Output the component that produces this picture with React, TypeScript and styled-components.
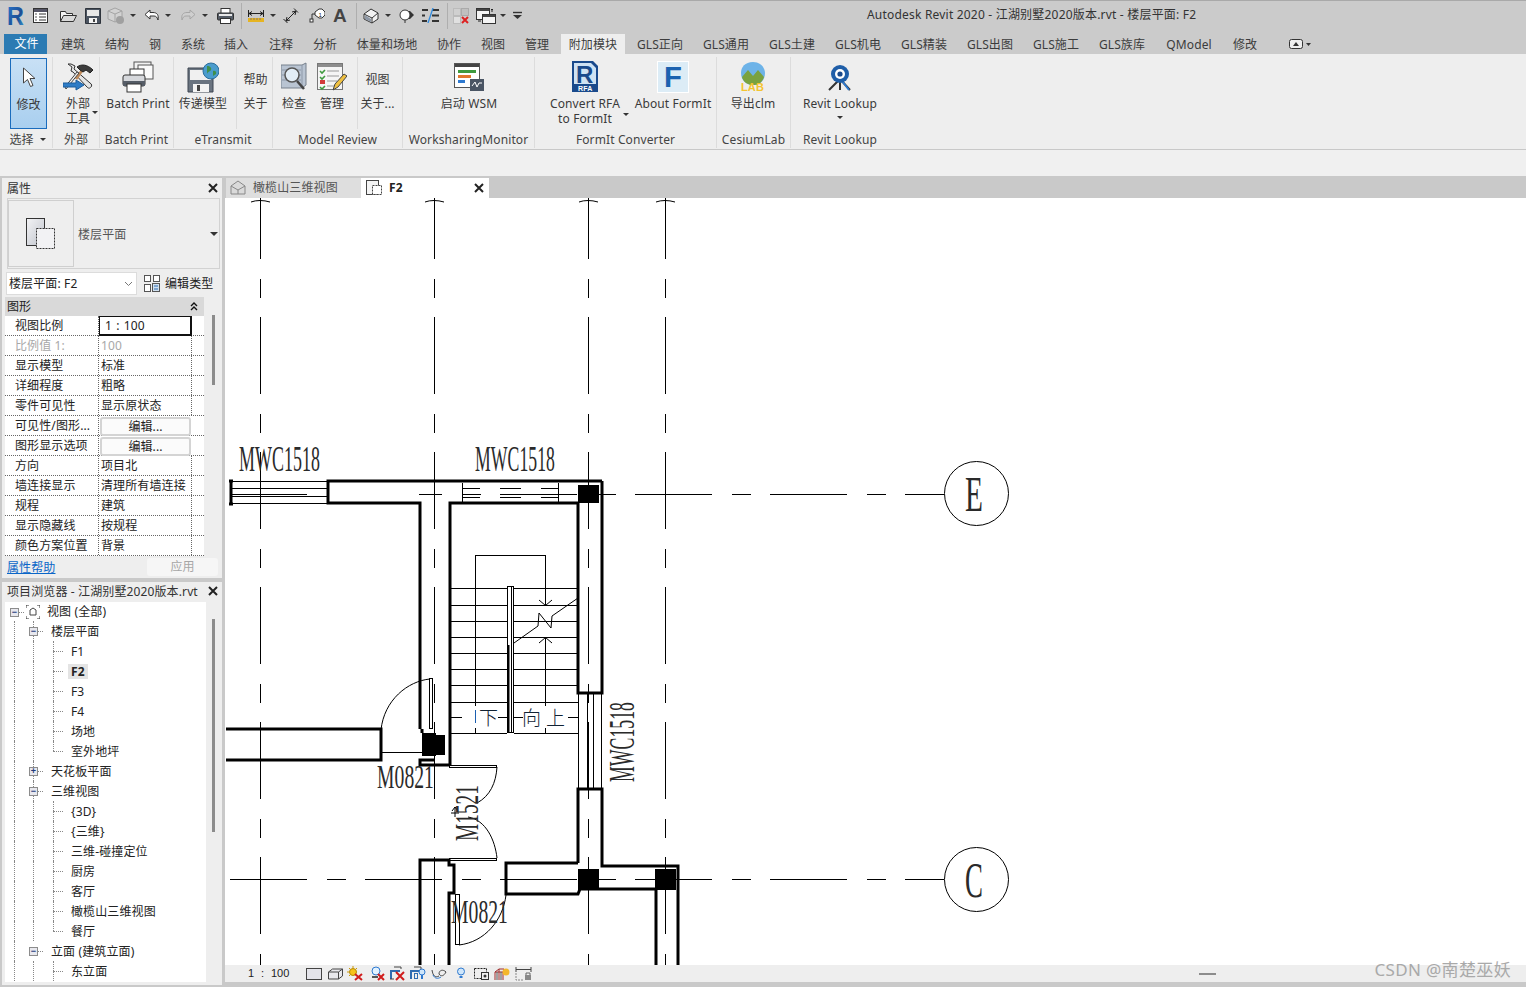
import React from "react";
import styled, { createGlobalStyle } from "styled-components";

const UI = `"Noto Sans", "Noto Sans CJK SC", sans-serif`;
const Global = createGlobalStyle`
  html, body { margin: 0; padding: 0; width: 1526px; height: 987px; overflow: hidden; background: #c9c9c9; }
  #root { width: 1526px; height: 987px; }
  * { box-sizing: border-box; }
`;

const Win = styled.div`
  width: 1526px; height: 987px; display: flex; flex-direction: column;
  background: #c9c9c9; font: 12px/15px ${UI}; letter-spacing: .12px; color: #3a3a3a; overflow: hidden;
  border-top: 1px solid #a9a9a9;
`;

/* ---------- title ---------- */
const TitleBar = styled.div`height: 33px; display: flex; align-items: center; background: #cbcbcb; padding-bottom: 4px;`;
const Slot = styled.div<{ $w: number; $ml: number }>`
  width: ${p => p.$w}px; margin-left: ${p => p.$ml}px; height: 26px; flex: none; display: flex; align-items: center; justify-content: center;
`;
const Sep = styled.div`width: 1px; height: 26px; background: #aeaeae;`;
const TitleText = styled.div<{ $ml: number }>`margin-left: ${p => p.$ml}px; font-size: 12px; letter-spacing: .2px; color: #333; white-space: nowrap; margin-bottom: 3px;`;

const Caret = styled.span`
  width: 0; height: 0; border: 3px solid transparent; border-top: 3px solid #333; border-bottom: 0; display: inline-block;
`;

/* ---------- tabs ---------- */
const TabBar = styled.div`height: 20px; display: flex; padding-left: 4px; background: #cbcbcb;`;
const FileTab = styled.div`
  width: 43px; height: 20px; background: #2c7bb3; color: #fff; text-align: center; line-height: 20px; padding-left: 2px;
`;
const Tab = styled.div<{ $w: number; $active?: boolean }>`
  width: ${p => p.$w}px; height: 20px; text-align: center; line-height: 21px; flex: none; color: #3c3c3c; white-space: nowrap;
  background: ${p => (p.$active ? "#eeeeee" : "transparent")};
`;

/* ---------- ribbon ---------- */
const Ribbon = styled.div`height: 96px; background: #eeeeee; display: flex; border-bottom: 1px solid #c8c8c8; padding-left: 3px;`;
const Panel = styled.div<{ $w: number; $end?: boolean }>`
  width: ${p => p.$w}px; flex: none; display: flex; flex-direction: column; position: relative; padding-left: 1px;
  border-right: ${p => (p.$end ? "0" : "1px solid #dcdcdc")}; margin-top: 3px; margin-bottom: 1px;
`;
const PanelBody = styled.div`height: 74px; display: flex;`;
const PanelLabel = styled.div`height: 18px; margin-left: -1px; padding-top: 1px; text-align: center; line-height: 18px; color: #444; white-space: nowrap; display:flex; align-items:center; justify-content:center; gap:6px;`;
const Big = styled.div<{ $w: number; $ml?: number; $sel?: boolean }>`
  width: ${p => p.$w}px; margin-left: ${p => p.$ml ?? 0}px; flex: none; display: flex; flex-direction: column; align-items: center; text-align: center; position: relative;
  padding-top: 1px; white-space: nowrap; height: 73px;
  ${p => p.$sel && `background: linear-gradient(#c8e0f5,#a9cfef); border: 1px solid #1a6cbd; padding-top: 0; margin-top: 1px; height: 71px;`}
`;
const BigIcon = styled.div`height: 38px; display: flex; align-items: center; justify-content: center; flex: none;`;
const MiniCaret = styled(Caret)<{ $l?: number; $t?: number }>`position: absolute; left: ${p => p.$l}px; top: ${p => p.$t}px;`;
const SmallCol = styled.div<{ $w: number; $ml: number }>`
  width: ${p => p.$w}px; margin-left: ${p => p.$ml}px; flex: none; padding-top: 15px; display: flex; flex-direction: column; align-items: center; gap: 9px;
  border-left: 1px solid #dcdcdc; height: 72px;
`;
const OptionsBar = styled.div`height: 26px; background: #f0f0f0;`;

/* ---------- workspace ---------- */
const Work = styled.div`flex: 1; display: flex; margin-top: 2px; min-height: 0;`;
const Side = styled.div`width: 220px; margin-left: 2px; flex: none; display: flex; flex-direction: column; gap: 4px; color: #222;`;
const Pane = styled.div<{ $h: number }>`height: ${p => p.$h}px; background: #eeeeee; flex: none; display: flex; flex-direction: column;`;
const PaneHead = styled.div<{ $up?: boolean }>`
  height: 20px; flex: none; display: flex; align-items: center; justify-content: space-between; padding: ${p => (p.$up ? "0 4px 2px 5px" : "0 4px 0 5px")}; color: #333; white-space: nowrap;
`;
const TypeBox = styled.div`
  height: 71px; margin: 0 2px 0 5px; border: 1px solid #d2d2d2; display: flex; align-items: center; position: relative; flex: none; color:#555; padding-bottom: 0;
`;
const TypeIcon = styled.div`
  width: 66px; height: 67px; margin-left: 0; border: 1px solid #cfcfcf; display: flex; align-items: center; justify-content: center; margin-right: 4px;
`;
const TypeName = styled.span`margin-top: 2px;`;
const TypeCaret = styled(Caret)`position: absolute; right: 1px; top: 33px; border-width: 4px 4px 0; `;
const InstanceRow = styled.div`height: 25px; margin: 2px 0 0 4px; display: flex; align-items: center; flex: none;`;
const Select = styled.div`
  width: 131px; height: 23px; background: #fff; border: 1px solid #dcdcdc; display: flex; align-items: center; justify-content: space-between; padding: 0 3px 0 2px;
`;
const EditType = styled.div`display: flex; align-items: center; gap: 5px; margin-left: 7px; color: #222;`;
const PropBody = styled.div`display: flex; flex: none;`;
const PropCol = styled.div`width: 199px; margin-left: 3px; flex: none;`;
const GroupHead = styled.div`
  height: 19px; background: #d9d9d9; display: flex; align-items: center; justify-content: space-between; padding: 0 6px 0 2px; margin-top: 1px;
  font-size: 12px;
`;
const PropRow = styled.div`
  display: grid; grid-template-columns: 94px 93px 12px; height: 20px; border-bottom: 1px dotted #666; background: #fff;
`;
const PropName = styled.div<{ $dim?: boolean }>`
  padding-left: 10px; line-height: 19px; border-right: 1px dotted #666; white-space: nowrap; overflow: hidden; color: ${p => (p.$dim ? "#a8a8a8" : "#222")};
`;
const PropVal = styled.div<{ $dim?: boolean; $focus?: boolean }>`
  padding-left: ${p => (p.$focus ? "5px" : "2px")}; line-height: ${p => (p.$focus ? "17px" : "19px")}; border-right: 1px dotted #666; white-space: nowrap; color: ${p => (p.$dim ? "#a8a8a8" : "#222")};
  ${p => p.$focus && `border: 1px solid #111; border-width: 1px 2px 2px 1px; word-spacing: 1px;`}
`;
const EditBtn = styled.div`
  margin: 1px; background: #fbfbfb; border: 2px solid #d4d4d4; border-radius: 3px; text-align: center; line-height: 15px; color: #222; white-space: nowrap;
`;
const Thumb = styled.div<{ $t: number; $h: number; $l: number }>`
  width: 3px; height: ${p => p.$h}px; background: #8c8c8c; margin-top: ${p => p.$t}px; margin-left: ${p => p.$l}px; flex: none;
`;
const PropFoot = styled.div`display: flex; align-items: center; justify-content: space-between; height: 22px; padding: 0 4px 0 5px;`;
const HelpLink = styled.a`color: #0a66c8; text-decoration: underline; `;
const ApplyBtn = styled.div`
  width: 71px; height: 18px; background: #f6f6f6; border-radius: 3px; text-align: center; line-height: 17px; color: #a6a6a6;
`;
const TreeWrap = styled.div`display: flex; flex: 1; min-height: 0; padding-bottom: 3px;`;
const Tree = styled.div`width: 201px; margin-left: 3px; background: #fff; overflow: hidden; flex: none; color: #222;`;
const TreeRow = styled.div<{ $h?: number }>`height: ${p => p.$h ?? 20}px; display: flex; align-items: center; white-space: nowrap;`;
const Cell = styled.div<{ $w: number; $v?: boolean; $h?: boolean; $last?: boolean; $cx: number }>`
  width: ${p => p.$w}px; height: 20px; flex: none; position: relative;
  &::before { content: ""; position: absolute; left: ${p => p.$cx}px; top: 0; bottom: ${p => (p.$last ? "10px" : "0")}; border-left: 1px dotted #888; display: ${p => (p.$v ? "block" : "none")}; }
  &::after { content: ""; position: absolute; left: ${p => p.$cx}px; right: 0; top: 10px; border-top: 1px dotted #888; display: ${p => (p.$h ? "block" : "none")}; }
`;
const Box = styled.div<{ $c: number }>`
  position: absolute; z-index: 1; left: ${p => p.$c - 4}px; top: 6px; width: 9px; height: 9px; background: #e8e8ee; border: 1px solid #8c8c8c;
  display: flex; align-items: center; justify-content: center; color: #223a7a; font: bold 9px/7px "Liberation Sans", sans-serif;
`;
const NodeText = styled.span<{ $sel?: boolean; $pad: number }>`
  margin-left: ${p => p.$pad}px; ${p => p.$sel && `font-weight: 700; background: #e4e4e4; margin-left: 5px; padding: 0 3px;`}
`;

/* ---------- doc area ---------- */
const Main = styled.div`flex: 1; margin-left: 3px; display: flex; flex-direction: column; min-width: 0;`;
const DocTabs = styled.div`height: 20px; display: flex; flex: none; background: #c9c9c9; padding-left: 1px;`;
const DocTab = styled.div<{ $w: number; $on?: boolean }>`
  width: ${p => p.$w}px; height: 20px; flex: none; display: flex; align-items: center; gap: 7px; padding: 0 5px 1px ${p => (p.$on ? "5px" : "4px")};
  background: ${p => (p.$on ? "#fff" : "#dedede")}; color: ${p => (p.$on ? "#222" : "#555")};
`;
const DocName = styled.span<{ $bold?: boolean }>`flex: 1; font-weight: ${p => (p.$bold ? 700 : 400)};`;
const Canvas = styled.div`height: 767px; background: #fff; flex: none;`;
const PlanSvg = styled.svg`display: block; width: 1301px; height: 767px; font-family: "Liberation Serif", serif;`;
const ViewBar = styled.div`
  height: 17px; background: #eeeeee; display: flex; align-items: center; flex: none; position: relative; padding-left: 23px; color: #222; font-size: 11px; letter-spacing: 0;
`;
const Scale = styled.div`width: 58px; flex: none; white-space: pre; word-spacing: .4px; font-family: "Liberation Sans", sans-serif;`;
const VSlot = styled.div<{ $w: number; $ml: number }>`
  width: ${p => p.$w}px; margin-left: ${p => p.$ml}px; flex: none; display: flex; justify-content: center;
`;
const Water = styled.div`
  position: absolute; right: 15px; top: -6px; font: 17px/22px "Noto Sans", "Noto Sans CJK SC", sans-serif; color: #a9a9a9; white-space: nowrap; letter-spacing: 0.35px;
`;
const HScroll = styled.div`position: absolute; left: 974px; top: 8px; width: 17px; height: 2px; background: #8c8c8c;`;

/* ---------- icons ---------- */
const Ico: React.FC<{ w?: number; h?: number; vb?: string; children: React.ReactNode }> = ({ w = 20, h = 20, vb, children }) => (
  <svg width={w} height={h} viewBox={vb ?? `0 0 ${w} ${h}`} style={{ display: "block", flex: "none" }}>{children}</svg>
);
const X: React.FC = () => (
  <Ico w={10} h={10}><path d="M1 1L9 9M9 1L1 9" stroke="#222" strokeWidth="2" /></Ico>
);

const RLogo = () => (
  <Ico w={21} h={30}>
    <defs><linearGradient id="rg" x1="0" x2="1" y1="0" y2="1"><stop offset="0" stopColor="#2f7ad0" /><stop offset=".6" stopColor="#1c4f96" /><stop offset="1" stopColor="#3aa0d8" /></linearGradient></defs>
    <text x="1" y="24" fontFamily="Liberation Sans" fontWeight="700" fontSize="26" fill="url(#rg)" textLength="17" lengthAdjust="spacingAndGlyphs">R</text>
  </Ico>
);
const QProps = () => (<Ico w={15} h={15}><rect x=".5" y=".5" width="14" height="14" fill="#fff" stroke="#333" /><rect x="1" y="1" width="13" height="3" fill="#556" /><path d="M6 6h7M6 9h7M6 12h7" stroke="#333" /><path d="M2 6h2M2 9h2M2 12h2" stroke="#555" /></Ico>);
const QOpen = () => (<Ico w={17} h={13}><path d="M.5 12.5V2.5h5l1 2h6v2" fill="#f4f4f4" stroke="#333" /><path d="M.5 12.5l3-6h13l-3 6z" fill="#dadada" stroke="#333" /></Ico>);
const QSave = () => (<Ico w={16} h={16}><path d="M.5.5h15v15H.5z" fill="#4a5360" stroke="#2f343c" /><rect x="2" y="2" width="12" height="6" fill="#e8e8e8" /><rect x="4" y="10" width="8" height="5" fill="#f4f4f4" /><rect x="8" y="11" width="2" height="3" fill="#444" /></Ico>);
const QCube = () => (<Ico w={18} h={18}><path d="M8 1l7 3v8l-7 3-7-3V4z" fill="#d2d2d2" stroke="#a4a4a4" /><path d="M1 4l7 3 7-3M8 7v8" stroke="#a4a4a4" fill="none" /><circle cx="13" cy="13" r="4" fill="#a0a0a0" /></Ico>);
const QUndo = ({ dim }: { dim?: boolean }) => (
  <Ico w={16} h={13}><path d="M6 1L1 5.5 6 10V7h4c2 0 3 1 4 4 1-5-1-7.5-5-7.5H6z" fill={dim ? "#cfcfcf" : "#fff"} stroke={dim ? "#a6a6a6" : "#333"} strokeLinejoin="round" transform={dim ? "matrix(-1 0 0 1 16 0)" : undefined} /></Ico>
);
const QPrint = () => (<Ico w={17} h={16}><rect x="4" y=".5" width="9" height="5" fill="#fff" stroke="#333" /><rect x=".5" y="5" width="16" height="7" rx="1" fill="#555c66" stroke="#333" /><rect x="2" y="6" width="13" height="2" fill="#e8e8e8" /><rect x="3.5" y="10.5" width="10" height="5" fill="#fff" stroke="#333" /></Ico>);
const QMeasure = () => (<Ico w={16} h={14}><path d="M.5 1v7M15.5 1v7M1 4.5h14M1 4.5l3-2M1 4.5l3 2M15 4.5l-3-2M15 4.5l-3 2" stroke="#222" fill="none" /><rect y="9" width="16" height="4" fill="#e6b422" /><path d="M3 9v2M6 9v2M9 9v2M12 9v2" stroke="#876" /></Ico>);
const QAlign = () => (<Ico w={16} h={16}><path d="M.5 11l4 4M11 .5l4 4M3 13L13 3M3 13l1-4M3 13l4-1M13 3l-4 1M13 3l-1 4" stroke="#222" fill="none" /></Ico>);
const QTag = () => (<Ico w={16} h={15}><path d="M6 4l4-3h3l3 3v3l-3 3h-3L6 7z" fill="#fff" stroke="#333" /><text x="9.5" y="8.5" fontSize="6" fontFamily="Liberation Sans" fill="#222">1</text><path d="M6 6L3 6v5" stroke="#333" fill="none" /><rect x="1" y="11" width="3" height="3" fill="#fff" stroke="#333" /></Ico>);
const QHouse = () => (<Ico w={16} h={16}><path d="M8 1l7 4v6l-6 4-8-4V6z" fill="#f2f2f2" stroke="#333" /><path d="M1 6l8 4 6-5M9 10v5" stroke="#333" fill="none" /><path d="M2 7l6 4v3l-6-3z" fill="#8d97a5" /></Ico>);
const QSection = () => (<Ico w={15} h={15}><path d="M8 3h3l4 4-4 4H8z" fill="#333" /><circle cx="6" cy="7" r="5" fill="#fff" stroke="#333" /><path d="M6 12v3" stroke="#333" /></Ico>);
const QThin = () => (<Ico w={17} h={15}><path d="M0 2h6M10 2h7M0 7.5h3M10 7.5h7M0 13h5M10 13h7" stroke="#333" strokeWidth="2" /><path d="M11 0L6 15" stroke="#2f8be0" strokeWidth="1.3" /></Ico>);
const QClose = () => (<Ico w={16} h={16}><rect x=".5" y=".5" width="7" height="7" fill="#d0d0d0" stroke="#bbb" /><rect x="8.5" y=".5" width="7" height="7" fill="#c0c0c0" stroke="#aaa" /><rect x=".5" y="8.5" width="7" height="7" fill="#e0e0e0" stroke="#bbb" /><path d="M9 9l6 6M15 9l-6 6" stroke="#d22" strokeWidth="2" /></Ico>);
const QSwitch = () => (<Ico w={20} h={16}><rect x=".5" y=".5" width="13" height="11" fill="#f4f4f4" stroke="#333" /><rect x="1" y="1" width="12" height="2" fill="#444" /><rect x="6.5" y="6.5" width="13" height="9" fill="#f4f4f4" stroke="#333" /><rect x="7" y="7" width="12" height="2" fill="#444" /><path d="M16 1v3M15 2l1-1 1 1M2 13h3" stroke="#222" fill="none" /></Ico>);
const QMore = () => (<Ico w={9} h={9}><path d="M0 1.5h9" stroke="#333" strokeWidth="1.4" /><path d="M0 4h9L4.5 8z" fill="#333" /></Ico>);
const QLetterA = () => (<Ico w={14} h={22}><text x="0" y="17" fontFamily="Liberation Sans" fontWeight="700" fontSize="19" fill="#444">A</text></Ico>);

const Cursor = () => (<Ico w={14} h={22}><path d="M1.5 1v15l4-3.5 3 7 2.5-1-3-7h5z" fill="#fff" stroke="#444" /></Ico>);
const Tools = () => (
  <Ico w={31} h={29}>
    <path d="M5 1l4 3-1 4 2 1 14 15c2 2 3 1 4 0s1-3-1-4L11 6l1-3-4-2z" fill="#e6e6e6" stroke="#333" />
    <path d="M13 16l7-10" stroke="#c08a5a" strokeWidth="3" />
    <path d="M14 4c4-3 10-3 16 3l-3 3-4-3-3 2-3-2z" fill="#3c3c3c" stroke="#222" />
    <path d="M2 24l12-15 2 1-13 16z" fill="#f0f0f0" stroke="#444" />
    <path d="M0 20h13v-3l8 5-8 5v-3H0z" fill="#2e7cc6" stroke="#1a5c9c" />
  </Ico>
);
const BatchPrint = () => (
  <Ico w={32} h={32}>
    <rect x="12" y="1" width="17" height="14" fill="#f2f2f2" stroke="#555" /><rect x="16" y="4" width="15" height="14" fill="#fafafa" stroke="#555" />
    <rect x="8" y="8" width="14" height="8" fill="#fff" stroke="#333" />
    <rect x="1" y="14" width="22" height="11" rx="2" fill="#d6d8dc" stroke="#333" /><rect x="1" y="20" width="22" height="5" fill="#555c66" />
    <rect x="5" y="23" width="14" height="8" fill="#fff" stroke="#333" />
  </Ico>
);
const ETrans = () => (
  <Ico w={32} h={31}>
    <path d="M1 6h25v24H1z" fill="#6a7480" stroke="#3c4450" /><rect x="3" y="8" width="21" height="10" fill="#f0f0f0" />
    <rect x="6" y="22" width="16" height="8" fill="#f4f4f4" /><rect x="10" y="23" width="3" height="6" fill="#444" />
    <circle cx="24" cy="9" r="8" fill="#4a9ccd" stroke="#2c6e9c" /><path d="M20 4c3 0 5 2 4 4s-3 1-4 4M26 9c2-1 4 1 3 3l-3 2z" fill="#3f8f4b" />
  </Ico>
);
const Check = () => (
  <Ico w={26} h={30}>
    <path d="M0 3h21l4-2v22l-4 3H0z" fill="#b9c4d2" stroke="#77808c" />
    <path d="M1 8h19M1 13h19M1 18h19M21 3v23" stroke="#8d98a8" />
    <circle cx="11" cy="13" r="7" fill="#e3eef7" stroke="#555" strokeWidth="1.5" />
    <path d="M16 19l7 8" stroke="#444" strokeWidth="2.5" />
  </Ico>
);
const Manage = () => (
  <Ico w={30} h={29}>
    <rect x=".5" y=".5" width="25" height="26" fill="#f5f5f5" stroke="#777" /><rect x="1" y="1" width="24" height="3" fill="#8d8d8d" />
    <path d="M3 8l2 2 3-3M3 14l2 2 3-3M3 24l2 2 3-3" stroke="#3e9a3e" strokeWidth="1.6" fill="none" />
    <rect x="3" y="17" width="5" height="4" fill="#d23a3a" />
    <path d="M10 8h12M10 13h12M10 18h10M10 23h7" stroke="#999" />
    <path d="M16 27l2-6 9-10 3 2-9 11z" fill="#f0c040" stroke="#444" />
  </Ico>
);
const Wsm = () => (
  <Ico w={30} h={28}>
    <rect x=".5" y=".5" width="25" height="24" fill="#fff" stroke="#555" /><rect x="1" y="1" width="24" height="3" fill="#444" />
    <rect x="4" y="7" width="18" height="3" fill="#3e9a3e" /><rect x="4" y="12" width="13" height="3" fill="#e0782e" /><rect x="4" y="17" width="7" height="3" fill="#2f7ad0" />
    <rect x="16" y="16" width="14" height="12" fill="#4a5564" /><path d="M18 23l3-4 2 5 2-4h3" stroke="#fff" fill="none" />
  </Ico>
);
const Rfa = () => (
  <Ico w={27} h={33}>
    <path d="M0 0h21l5 5v26H0z" fill="#1a4a8c" /><path d="M2 2h17l5 5v16H2z" fill="#cfe2f3" />
    <text x="4" y="22" fontFamily="Liberation Sans" fontWeight="700" fontSize="24" fill="#1a4a8c">R</text>
    <text x="6" y="30" fontFamily="Liberation Sans" fontWeight="700" fontSize="7" fill="#fff">RFA</text>
  </Ico>
);
const Formit = () => (
  <Ico w={32} h={33}>
    <rect width="32" height="32" fill="#fff" /><rect x="1" y="1" width="30" height="30" fill="#dcecf6" />
    <text x="7" y="26" fontFamily="Liberation Sans" fontWeight="700" fontSize="30" fill="#1b62b0" textLength="18" lengthAdjust="spacingAndGlyphs">F</text>
  </Ico>
);
const Lab = () => (
  <Ico w={26} h={33}>
    <path d="M13 1c8 0 12 6 12 11 0 8-6 12-12 12S1 20 1 12C1 6 5 1 13 1z" fill="#6db3e8" />
    <path d="M2 16l6-7 5 6 5-6 6 7c-2 6-6 8-11 8S3 21 2 16z" fill="#7aa23f" />
    <text x="1" y="30" fontFamily="Liberation Sans" fontWeight="700" fontSize="11" fill="#f4c430">LAB</text>
  </Ico>
);
const Lookup = () => (
  <Ico w={28} h={28}>
    <path d="M14 16L3 27M14 16l10 11M14 18v9" stroke="#333" strokeWidth="2" /><path d="M16 18l7 9" stroke="#2f7ad0" strokeWidth="2" />
    <circle cx="14" cy="11" r="9" fill="#1f5ea8" /><circle cx="14" cy="11" r="5" fill="#fff" /><circle cx="14" cy="11" r="2.6" fill="#1a4a8c" />
  </Ico>
);
const TypeGlyph = () => (
  <Ico w={32} h={32}>
    <defs><linearGradient id="tg" x1="0" x2="1" y1="0" y2="1"><stop offset="0" stopColor="#f4f4f6" /><stop offset="1" stopColor="#c0c4cc" /></linearGradient></defs>
    <rect x="1.5" y=".5" width="18" height="27" fill="url(#tg)" stroke="#333" />
    <rect x="11.5" y="10.5" width="18" height="20" fill="#f2f2f4" stroke="#333" strokeDasharray="2 1" />
  </Ico>
);
const EditTypeGlyph = () => (
  <Ico w={16} h={17}><rect x=".5" y=".5" width="6" height="6" fill="#fff" stroke="#555" /><rect x="9.5" y=".5" width="6" height="6" fill="#fff" stroke="#555" /><rect x=".5" y="9.5" width="6" height="7" fill="#fff" stroke="#555" /><rect x="8.5" y="8.5" width="7" height="8" fill="#cfe0ef" stroke="#555" /><path d="M10 11h4M10 14h4" stroke="#2f6bb0" /></Ico>
);
const Chev = () => (<Ico w={8} h={9}><path d="M1 4l3-3 3 3M1 8l3-3 3 3" stroke="#111" strokeWidth="1.4" fill="none" /></Ico>);
const DownChev = () => (<Ico w={9} h={6}><path d="M1 1l3.5 3.5L8 1" stroke="#777" fill="none" /></Ico>);
const ViewRootIcon = () => (<Ico w={14} h={14}><path d="M0 3V0h3M11 0h3v3M14 11v3h-3M3 14H0v-3" stroke="#333" fill="none" /><path d="M4 5l3-2 3 2v5H4z" fill="#fff" stroke="#444" /></Ico>);
const HouseTab = () => (<Ico w={16} h={15}><path d="M8 1l7 5v8H1V6z" fill="#dadada" stroke="#888" /><path d="M1 6l7 4 7-4M8 10v4" stroke="#888" fill="none" /></Ico>);
const PlanTab = () => (<Ico w={16} h={15}><rect x=".5" y=".5" width="12" height="14" fill="#f4f4f4" stroke="#444" /><rect x="6.5" y="5.5" width="9" height="9" fill="#fff" stroke="#444" strokeDasharray="2 1" /></Ico>);

const viewIcons: [number, number, React.ReactNode][] = [
  [16, 0, <Ico w={16} h={12}><rect x=".5" y=".5" width="15" height="11" fill="#e4e4ea" stroke="#444" /></Ico>],
  [15, 6, <Ico w={15} h={12}><path d="M.5 4l4-3h10v7l-4 3H.5z" fill="#e8e8ec" stroke="#444" /><path d="M.5 4h10v7M10.5 4l4-3" stroke="#444" fill="none" /></Ico>],
  [16, 4, <Ico w={16} h={15}><circle cx="6" cy="6" r="3.5" fill="#f6c21a" stroke="#b78a00" /><path d="M6 0v2M0 6h2M2 2l1 1M10 2l-1 1M2 10l1-1" stroke="#c9980a" /><path d="M8 8l7 6M15 8l-7 6" stroke="#d01c1c" strokeWidth="2" /></Ico>],
  [14, 8, <Ico w={14} h={15}><circle cx="5" cy="5" r="4" fill="#e2f2ff" stroke="#2f7ad0" /><path d="M1 11h6" stroke="#222" strokeWidth="1.5" /><path d="M7 8l6 6M13 8l-6 6" stroke="#d01c1c" strokeWidth="2" /></Ico>],
  [16, 5, <Ico w={16} h={15}><path d="M1 13V5h9" stroke="#2f6bb0" strokeWidth="2" fill="none" /><path d="M4 1h7v2" stroke="#444" fill="none" /><path d="M0 13h4" stroke="#444" /><path d="M6 6l8 8M14 6l-8 8" stroke="#d01c1c" strokeWidth="2" /></Ico>],
  [16, 4, <Ico w={16} h={15}><path d="M1 13V5h9" stroke="#2f6bb0" strokeWidth="2" fill="none" /><path d="M4 1h7v2" stroke="#444" fill="none" /><rect x="4.5" y="7.5" width="3" height="5" stroke="#2f6bb0" fill="none" /><circle cx="12" cy="6" r="3" fill="#cfe6fa" stroke="#2f7ad0" /><path d="M12 9v4" stroke="#2f7ad0" strokeWidth="2" /></Ico>],
  [16, 5, <Ico w={16} h={12}><path d="M1 2c1 6 3 8 7 6M15 4c-3-3-7-2-7 2 2 3 5 2 7-2z" stroke="#444" fill="none" /><path d="M2 7c2 4 5 4 8 2" stroke="#2f7ad0" fill="none" /></Ico>],
  [8, 10, <Ico w={8} h={13}><circle cx="4" cy="4.5" r="3.5" fill="#cfe6fa" stroke="#2f7ad0" /><path d="M2.5 9h3v2h-3z" fill="#2f7ad0" /></Ico>],
  [15, 9, <Ico w={15} h={13}><rect x=".5" y="1.5" width="12" height="10" fill="none" stroke="#222" strokeDasharray="2 1" /><rect x="7.5" y="5.5" width="7" height="7" fill="#eee" stroke="#333" /><circle cx="11" cy="9" r="1.5" fill="#333" /></Ico>],
  [16, 5, <Ico w={16} h={14}><path d="M1 13V5l4-3h5v3H1M5 2v11M9 5v8" stroke="#a02c2c" fill="none" /><path d="M3 13V5M7 13V5" stroke="#555" /><circle cx="12" cy="5" r="3.5" fill="#f4b72a" /></Ico>],
  [17, 5, <Ico w={17} h={14}><path d="M1 0v5M16 0v5M1 2.5h15" stroke="#444" /><path d="M1 6v7h7" stroke="#888" strokeDasharray="2 1" fill="none" /><rect x="10" y="8" width="6" height="5" fill="#888" /><path d="M11 8V6h4v2" stroke="#666" fill="none" /></Ico>],
];

/* ---------- floor plan ---------- */
const Thick = styled.path`fill: none; stroke: #000; stroke-width: 3; stroke-linejoin: miter;`;
const Thin = styled.path`fill: none; stroke: #000; stroke-width: 1; shape-rendering: crispEdges;`;
const Curve = styled.path`fill: none; stroke: #000; stroke-width: 1;`;
const Grid = styled.path`fill: none; stroke: #000; stroke-width: 1; shape-rendering: crispEdges; stroke-dasharray: 77 20 19 19;`;
const Solid = styled.rect`fill: #000;`;
const Mask = styled.rect`fill: #fff;`;
const Hollow = styled.rect`fill: #fff; stroke: #000; stroke-width: 1; shape-rendering: crispEdges;`;

const Lbl: React.FC<{ x: number; y: number; len: number; size?: number; rot?: boolean; t: string }> = ({ x, y, len, size = 35, rot, t }) => (
  <text x={x} y={y} fontSize={size} textLength={len} lengthAdjust="spacingAndGlyphs" fill="#2a2a2a"
    transform={rot ? `rotate(-90 ${x} ${y})` : undefined}>{t}</text>
);

const stairY = [588, 605, 621, 637, 653, 669, 685, 702, 717, 733];

const Plan = () => (
  <PlanSvg viewBox="225 198 1301 767">
    {[260, 434, 588, 665].map(x => (
      <g key={x}>
        <Grid d={`M${x}.5 182V965`} />
        <path d={`M${x - 9} 202Q${x - 5} 200.5 ${x} 200.5T${x + 10} 202`} fill="none" stroke="#000" />
      </g>
    ))}
    <Grid d="M230 494.5H944" />
    <Grid d="M230 879.5H944" />
    <circle cx="976.5" cy="493.5" r="32" fill="#fff" stroke="#000" />
    <circle cx="976.5" cy="879.5" r="32" fill="#fff" stroke="#000" />
    <Lbl x={965} y={511} len={18} size={50} t="E" />
    <Lbl x={965} y={897} len={18} size={50} t="C" />

    <Mask x="329" y="483" width="90" height="19" />
    {/* left window */}
    <Thin d="M232 481.5H328M232 488.5H328M232 496.5H328M232 503.5H328M237 494.5H307" />
    <Thick d="M229 481H233M231 481V504M229 504H233" />
    {/* upper wall */}
    <Thick d="M602 481H328V503H420V729" />
    <Thick d="M450 765V503H578" />
    <Thin d="M462.5 483V503M558.5 483V503M462 488.5H480M500 488.5H521M541 488.5H558M462 497.5H480M500 497.5H521M541 497.5H558" />
    <Solid x="578" y="485" width="21" height="18" />
    <Thick d="M578 503V693H602V481" />
    <Thin d="M578.5 693V789M587.5 693V789M593.5 693V789M601.5 693V789" />
    <Thick d="M578 863V789H602V866H678V965" />
    <Thick d="M578 863H506V894H578L580 889H656V965" />
    <Solid x="578" y="869" width="21" height="21" />
    <Solid x="655" y="869" width="21" height="21" />

    {/* stairs */}
    <Thin d={stairY.map(y => `M451 ${y}.5H507M514 ${y}.5H578`).join("")} />
    <Thin d="M475.5 733V555.5H545.5V605M545.5 638V733" />
    <Curve d="M539 600L545.5 605.5L552 600M539 643L545.5 637.5L552 643" />
    <Curve d="M514 643L538 626L539 613L551 628L552 616L578 598" />
    <Hollow x="507.5" y="586.5" width="6" height="146" />
    <Thin d="M511.5 587V733" />
    <Solid x="507" y="645" width="2.5" height="88" />
    <Mask x="462" y="706" width="36" height="22" />
    <Mask x="523" y="706" width="45" height="22" />
    <path d="M475.5 710V723" stroke="#1c5fb0" fill="none" />
    <text x="479" y="725" fontSize="19" fontFamily="Noto Sans CJK SC" fontWeight="300" fill="#123">下</text>
    <text x="522" y="725" fontSize="19" fontFamily="Noto Sans CJK SC" fontWeight="300" fill="#123" letterSpacing="5">向上</text>

    {/* door by stair */}
    <Hollow x="429.5" y="678.5" width="3" height="50" />
    <Curve d="M430 679C408 681 384 700 381 730" />
    <Thick d="M226 729H381V760H226" />
    <Thin d="M381 752.5H422" />
    <Solid x="422" y="733" width="14" height="23" />
    <Solid x="436" y="735" width="9" height="20" />
    <Thick d="M422 729V733M450 765H420V760H434" />

    {/* M1521 */}
    <Hollow x="449.5" y="765.5" width="47" height="2" />
    <Curve d="M497 767C496 783 490 796 477 803" />
    <Hollow x="449.5" y="858.5" width="47" height="2" />
    <Curve d="M497 858C495 840 486 820 468 817" />
    <Curve d="M455 807V817M451 813H459M452 811L455 807L458 811" />

    {/* lower-left */}
    <Thick d="M420 965V860H449V865H454V893H449V965" />
    <Hollow x="455.5" y="894.5" width="4" height="50" />
    <Curve d="M459 945C485 942 503 920 506 895" />

    <Lbl x={239} y={471} len={81} t="MWC1518" />
    <Lbl x={475} y={471} len={80} t="MWC1518" />
    <Lbl x={377} y={788} len={57} size={34} t="M0821" />
    <Lbl x={451} y={923} len={57} size={34} t="M0821" />
    <Lbl x={634} y={782} len={80} rot t="MWC1518" />
    <Lbl x={478} y={841} len={56} size={34} rot t="M1521" />
  </PlanSvg>
);

/* ---------- data ---------- */
const tabs: [string, number][] = [["建筑", 52], ["结构", 36], ["钢", 40], ["系统", 36], ["插入", 50], ["注释", 40], ["分析", 48], ["体量和场地", 76], ["协作", 48], ["视图", 40], ["管理", 48], ["附加模块", 64], ["GLS正向", 70], ["GLS通用", 62], ["GLS土建", 70], ["GLS机电", 62], ["GLS精装", 70], ["GLS出图", 62], ["GLS施工", 70], ["GLS族库", 62], ["QModel", 72], ["修改", 40]];

const qat: [number, number, React.ReactNode][] = [
  [16, 22, <RLogo />], [40, 16, <QProps />], [68, 18, <QOpen />], [93, 16, <QSave />], [116, 18, <QCube />], [133, 6, <Caret />],
  [152, 16, <QUndo />], [168, 6, <Caret />], [188, 16, <QUndo dim />], [205, 6, <Caret />], [225, 17, <QPrint />], [241, 1, <Sep />],
  [256, 16, <QMeasure />], [273, 6, <Caret />], [291, 16, <QAlign />], [317, 16, <QTag />], [340, 14, <QLetterA />], [356, 1, <Sep />],
  [371, 16, <QHouse />], [388, 6, <Caret />], [406, 15, <QSection />], [430, 17, <QThin />], [447, 1, <Sep />],
  [461, 16, <QClose />], [486, 20, <QSwitch />], [503, 6, <Caret />], [517, 9, <QMore />],
];
const qatEnd = 522;

type P = { n: string; v?: string; btn?: boolean; dim?: boolean; focus?: boolean };
const props: P[] = [
  { n: "视图比例", v: "1 : 100", focus: true }, { n: "比例值 1:", v: "100", dim: true }, { n: "显示模型", v: "标准" }, { n: "详细程度", v: "粗略" },
  { n: "零件可见性", v: "显示原状态" }, { n: "可见性/图形...", v: "编辑...", btn: true }, { n: "图形显示选项", v: "编辑...", btn: true },
  { n: "方向", v: "项目北" }, { n: "墙连接显示", v: "清理所有墙连接" }, { n: "规程", v: "建筑" }, { n: "显示隐藏线", v: "按规程" }, { n: "颜色方案位置", v: "背景" },
];

type N = { t: string; d: 1 | 2; box?: "+" | "-"; last?: boolean; sel?: boolean };
const nodes: N[] = [
  { t: "楼层平面", d: 1, box: "-" }, { t: "F1", d: 2 }, { t: "F2", d: 2, sel: true }, { t: "F3", d: 2 }, { t: "F4", d: 2 }, { t: "场地", d: 2 }, { t: "室外地坪", d: 2, last: true },
  { t: "天花板平面", d: 1, box: "+" }, { t: "三维视图", d: 1, box: "-" }, { t: "{3D}", d: 2 }, { t: "{三维}", d: 2 }, { t: "三维-碰撞定位", d: 2 }, { t: "厨房", d: 2 }, { t: "客厅", d: 2 }, { t: "橄榄山三维视图", d: 2 }, { t: "餐厅", d: 2, last: true },
  { t: "立面 (建筑立面)", d: 1, box: "-" }, { t: "东立面", d: 2 },
];

const QatItems = () => {
  let edge = 0;
  return (
    <>
      {qat.map(([c, w, node], i) => {
        const left = Math.round(c - w / 2);
        const ml = left - edge;
        edge = left + w;
        return <Slot key={i} $w={w} $ml={ml}>{node}</Slot>;
      })}
    </>
  );
};

export default function App() {
  return (
    <Win>
      <Global />
      <TitleBar>
        <QatItems />
        <TitleText $ml={867 - qatEnd}>Autodesk Revit 2020 - 江湖别墅2020版本.rvt - 楼层平面: F2</TitleText>
      </TitleBar>

      <TabBar>
        <FileTab>文件</FileTab>
        {tabs.map(([t, w]) => <Tab key={t} $w={w} $active={t === "附加模块"}>{t}</Tab>)}
        <Tab $w={70}><svg width="22" height="10" viewBox="0 0 22 10"><rect x=".5" y=".5" width="13" height="9" rx="2" fill="#eee" stroke="#333" /><path d="M4 7l3-4 3 4z" fill="#333" /><path d="M17 4h5l-2.5 3z" fill="#333" /></svg></Tab>
      </TabBar>

      <Ribbon>
        <Panel $w={50}>
          <PanelBody>
            <Big $w={37} $ml={6} $sel>
              <BigIcon><Cursor /></BigIcon>
              修改
            </Big>
          </PanelBody>
          <PanelLabel>选择<Caret /></PanelLabel>
        </Panel>
        <Panel $w={47}>
          <PanelBody>
            <Big $w={48}>
              <BigIcon><Tools /></BigIcon>
              外部<br />工具
              <MiniCaret $l={38} $t={54} />
            </Big>
          </PanelBody>
          <PanelLabel>外部</PanelLabel>
        </Panel>
        <Panel $w={74}>
          <PanelBody><Big $w={74}><BigIcon><BatchPrint /></BigIcon>Batch Print</Big></PanelBody>
          <PanelLabel>Batch Print</PanelLabel>
        </Panel>
        <Panel $w={99}>
          <PanelBody>
            <Big $w={56}><BigIcon><ETrans /></BigIcon>传递模型</Big>
            <SmallCol $w={38} $ml={5}><span>帮助</span><span>关于</span></SmallCol>
          </PanelBody>
          <PanelLabel>eTransmit</PanelLabel>
        </Panel>
        <Panel $w={130}>
          <PanelBody>
            <Big $w={40}><BigIcon><Check /></BigIcon>检查</Big>
            <Big $w={36}><BigIcon><Manage /></BigIcon>管理</Big>
            <SmallCol $w={40} $ml={7}><span>视图</span><span>关于...</span></SmallCol>
          </PanelBody>
          <PanelLabel>Model Review</PanelLabel>
        </Panel>
        <Panel $w={132}>
          <PanelBody><Big $w={130}><BigIcon><Wsm /></BigIcon>启动 WSM</Big></PanelBody>
          <PanelLabel>WorksharingMonitor</PanelLabel>
        </Panel>
        <Panel $w={182}>
          <PanelBody>
            <Big $w={98}><BigIcon><Rfa /></BigIcon>Convert RFA<br />to FormIt<MiniCaret $l={87} $t={56} /></Big>
            <Big $w={78}><BigIcon><Formit /></BigIcon>About FormIt</Big>
          </PanelBody>
          <PanelLabel>FormIt Converter</PanelLabel>
        </Panel>
        <Panel $w={74}>
          <PanelBody><Big $w={70}><BigIcon><Lab /></BigIcon>导出clm</Big></PanelBody>
          <PanelLabel>CesiumLab</PanelLabel>
        </Panel>
        <Panel $w={98} $end>
          <PanelBody><Big $w={96}><BigIcon><Lookup /></BigIcon>Revit Lookup<MiniCaret $l={45} $t={59} /></Big></PanelBody>
          <PanelLabel>Revit Lookup</PanelLabel>
        </Panel>
      </Ribbon>
      <OptionsBar />

      <Work>
        <Side>
          <Pane $h={400}>
            <PaneHead>属性<X /></PaneHead>
            <TypeBox>
              <TypeIcon><TypeGlyph /></TypeIcon>
              <TypeName>楼层平面</TypeName>
              <TypeCaret />
            </TypeBox>
            <InstanceRow>
              <Select>楼层平面: F2<DownChev /></Select>
              <EditType><EditTypeGlyph />编辑类型</EditType>
            </InstanceRow>
            <PropBody>
              <PropCol>
                <GroupHead>图形<Chev /></GroupHead>
                {props.map(p => (
                  <PropRow key={p.n}>
                    <PropName $dim={p.dim}>{p.n}</PropName>
                    {p.btn ? <EditBtn>{p.v}</EditBtn> : <PropVal $dim={p.dim} $focus={p.focus}>{p.v}</PropVal>}
                    <span />
                  </PropRow>
                ))}
              </PropCol>
              <Thumb $t={19} $h={70} $l={8} />
            </PropBody>
            <PropFoot><HelpLink>属性帮助</HelpLink><ApplyBtn>应用</ApplyBtn></PropFoot>
          </Pane>
          <Pane $h={403}>
            <PaneHead $up>项目浏览器 - 江湖别墅2020版本.rvt<X /></PaneHead>
            <TreeWrap>
              <Tree>
                <TreeRow $h={19}>
                  <Cell $w={19} $cx={9} $h><Box $c={9}>−</Box></Cell>
                  <Cell $w={2} $cx={0} />
                  <ViewRootIcon />
                  <NodeText $pad={7}>视图 (全部)</NodeText>
                </TreeRow>
                {nodes.map(n => (
                  <TreeRow key={n.t}>
                    <Cell $w={19} $cx={9} $v />
                    {n.d === 1 ? (
                      <>
                        <Cell $w={19} $cx={9} $v={n.t !== "立面 (建筑立面)"} $h><Box $c={9}>{n.box === "+" ? "+" : "−"}</Box></Cell>
                        <NodeText $pad={8}>{n.t}</NodeText>
                      </>
                    ) : (
                      <>
                        <Cell $w={19} $cx={9} $v />
                        <Cell $w={20} $cx={10} $v $h $last={n.last} />
                        <NodeText $pad={8} $sel={n.sel}>{n.t}</NodeText>
                      </>
                    )}
                  </TreeRow>
                ))}
              </Tree>
              <Thumb $t={17} $h={213} $l={6} />
            </TreeWrap>
          </Pane>
        </Side>

        <Main>
          <DocTabs>
            <DocTab $w={135}><HouseTab /><DocName>橄榄山三维视图</DocName></DocTab>
            <DocTab $w={128} $on><PlanTab /><DocName $bold>F2</DocName><X /></DocTab>
          </DocTabs>
          <Canvas><Plan /></Canvas>
          <ViewBar>
            <Scale>{"1  :  100"}</Scale>
            {viewIcons.map(([w, ml, icon], i) => <VSlot key={i} $w={w} $ml={ml}>{icon}</VSlot>)}
            <HScroll />
            <Water>CSDN @南楚巫妖</Water>
          </ViewBar>
        </Main>
      </Work>
    </Win>
  );
}
